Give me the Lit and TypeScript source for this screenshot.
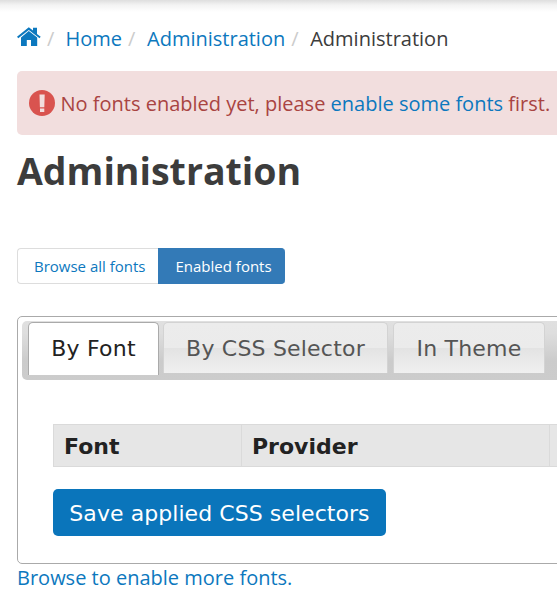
import { LitElement, html, css } from "lit";
import { customElement } from "lit/decorators.js";

@customElement("app-root")
class AppRoot extends LitElement {
  static styles = css`
    :host {
      display: block;
      height: 603px;
      overflow: hidden;
      background: linear-gradient(#dedede, #f3f3f3 5px, #fff 12px);
      font-family: "Open Sans", sans-serif;
      font-size: 20px;
      line-height: 28px;
      color: #3c3c3c;
      white-space: nowrap;
    }
    * { box-sizing: border-box; }
    a { color: #0c78be; text-decoration: none; }
    .page { padding: 25px 0 0 17px; }
    .crumbs { display: flex; height: 46px; }
    .crumbs svg { width: 24px; height: 20px; margin-top: 2px; }
    .sep { color: #ccc; width: 25px; padding-left: 6px; flex: none; }
    .home + .sep { width: 24.5px; }
    .alert {
      display: flex;
      align-items: center;
      width: 560px;
      height: 64px;
      padding: 2px 0 0 12px;
      border-radius: 5px;
      background: #f2dede;
      color: #a94442;
    }
    .alert svg { width: 26px; height: 26px; margin: -2px 5.5px 0 0; }
    h1 { margin: 8px 0 0; font-size: 37.5px; line-height: 56px; font-weight: 700; height: 105px; }
    .pills { display: flex; height: 36px; font-size: 15px; line-height: 36px; }
    .pill { border: 1px solid #ddd; border-right: 0; border-radius: 4px 0 0 4px; width: 141px; padding-left: 16px; line-height: 35px; }
    .pill.on { width: 127px; padding-left: 16.5px; color: #fff; background: #337ab7; border-color: #337ab7; border-radius: 0 4px 4px 0; }
    .tabs {
      width: 570px;
      height: 248px;
      margin-top: 32px;
      padding: 4px;
      border: 1px solid #aaa;
      border-radius: 5px;
      font-family: "DejaVu Sans", sans-serif;
      font-size: 22px;
      color: #222;
    }
    .bar {
      display: flex;
      gap: 4px;
      height: 59px;
      padding: 1px 0 0 6px;
      border-radius: 5px;
      background: linear-gradient(#e0e0e0, #dedede 12px, #cbcbcb 40px, #ccc);
    }
    .tab {
      height: 51px;
      line-height: 51px;
      text-align: center;
      letter-spacing: 0.2px;
      border: 1px solid #d3d3d3;
      border-bottom: 0;
      border-radius: 5px 5px 0 0;
      color: #555;
      background: linear-gradient(#ececec, #ebebeb 49%, #e3e3e3 51%, #f0f0f0);
    }
    .tab.on { height: 53px; color: #222; border-color: #aaa; background: #fff; }
    .w1 { width: 131px; }
    .w2 { width: 225px; }
    .w3 { width: 152px; margin-left: 1px; }
    .head {
      display: flex;
      height: 43px;
      margin: 44px 0 0 31px;
      border: 1px solid #dadada;
      background: #e6e6e6;
      font-weight: 700;
      line-height: 43px;
    }
    .head div { padding-left: 10px; border-right: 1px solid #dadada; }
    .c1 { width: 188px; }
    .c2 { width: 308px; }
    button {
      display: block;
      width: 333px;
      height: 47px;
      margin: 22px 0 0 31px;
      padding: 2px 0 0;
      border: 0;
      border-radius: 5px;
      background: #0a75bb;
      color: #fff;
      font: 22px "DejaVu Sans", sans-serif;
      letter-spacing: 0.06px;
    }
  `;

  render() {
    return html`
      <div class="page">
        <nav class="crumbs">
          <a class="home" href="#"><svg viewBox="0 0 24 20" fill="#0c78be">
            <path d="M0 9.8 11.8.2 16 3.6V.8h4v6.1l3.7 2.9-1.2 1.5L11.8 2.9 1.3 11.3z" />
            <path d="M4 10.4 11.8 4l8.4 6.6V19H14v-6H9.8v6H4z" />
          </svg></a>
          <span class="sep">/</span><a href="#">Home</a>
          <span class="sep">/</span><a href="#">Administration</a>
          <span class="sep">/</span><span>Administration</span>
        </nav>
        <div class="alert">
          <svg viewBox="0 0 26 26"><circle cx="13" cy="13" r="13" fill="#d9534f" />
            <path d="M10.5 4.5h5.2l-.4 12.8h-4.4zM11 18.4h4.3v3.6H11z" fill="#f2dede" /></svg>
          <span>No fonts enabled yet, please <a href="#">enable some fonts</a> first.</span>
        </div>
        <h1>Administration</h1>
        <div class="pills"><a class="pill" href="#">Browse all fonts</a><a class="pill on" href="#">Enabled fonts</a></div>
        <section class="tabs">
          <div class="bar">
            <div class="tab on w1">By Font</div>
            <div class="tab w2">By CSS Selector</div>
            <div class="tab w3">In Theme</div>
          </div>
          <div class="head"><div class="c1">Font</div><div class="c2">Provider</div></div>
          <button>Save applied CSS selectors</button>
        </section>
        <a href="#">Browse to enable more fonts.</a>
      </div>
    `;
  }
}
